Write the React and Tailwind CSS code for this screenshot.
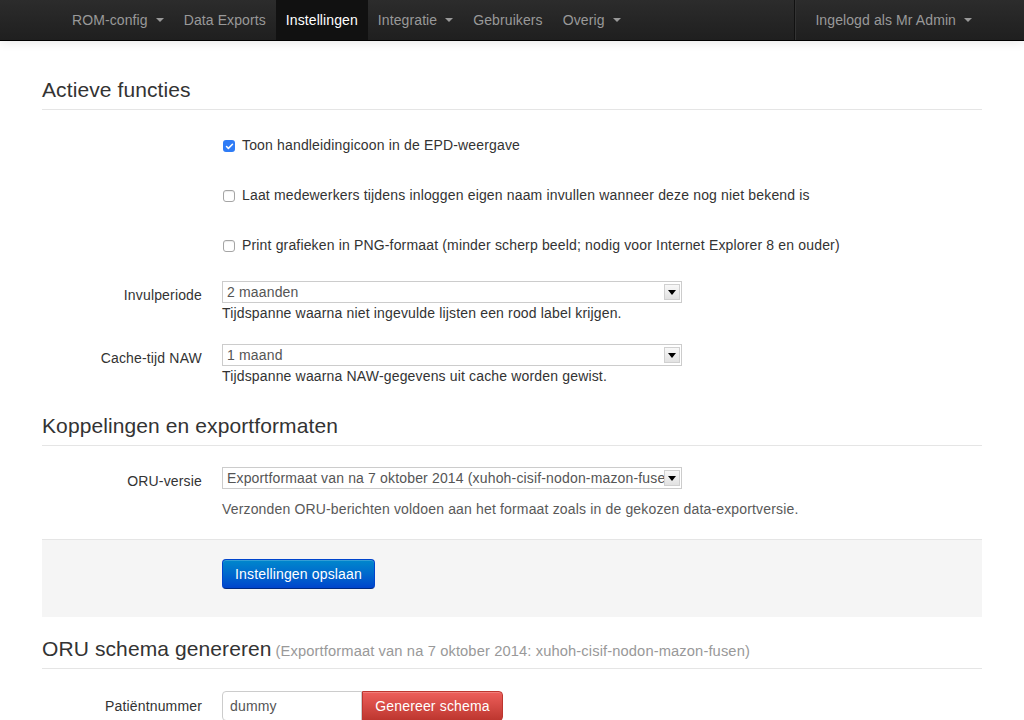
import { Check } from "lucide-react";

const FONT = { fontFamily: '"Liberation Sans", Arial, sans-serif' };

function Caret({ className = "border-t-[#999]" }) {
  return (
    <span className={`inline-block ml-[8px] align-middle w-0 h-0 border-l-[4px] border-r-[4px] border-t-[4px] border-l-transparent border-r-transparent ${className}`} />
  );
}

function NavItem({ label, caret, active }) {
  return (
    <li
      className={`h-10 px-[10px] flex items-center text-[14px] tracking-[0.1px] ${
        active ? "bg-[#111] text-white" : "text-[#999]"
      }`}
    >
      {label}
      {caret && <Caret />}
    </li>
  );
}

function CheckRow({ checked, children }) {
  return (
    <div className="ml-[180px] py-[5px] mb-5 leading-5 flex items-center gap-[7px] text-[14px] tracking-[0.16px] text-[#333]">
      {checked ? (
        <span className="w-[12px] h-[12px] ml-[1px] mt-[2px] rounded-[3px] bg-[#2f7cf6] grid place-items-center">
          <Check className="w-[9px] h-[9px] text-white" strokeWidth={4} />
        </span>
      ) : (
        <span className="w-[12px] h-[12px] ml-[1px] mt-[2px] rounded-[3px] border border-[#a5a5a5] bg-white shadow-[inset_0_1px_1px_rgba(0,0,0,0.08)]" />
      )}
      <span>{children}</span>
    </div>
  );
}

function FakeSelect({ value }) {
  return (
    <div className="w-[460px] h-[22px] border border-[#ccc] bg-white flex items-center justify-between pl-[4px] pr-[1px]">
      <span className="flex-1 min-w-0 overflow-hidden whitespace-nowrap text-[14px] tracking-[0.16px] text-[#555] leading-5">{value}</span>
      <span className="w-[16px] h-[16px] shrink-0 border border-[#d0d0d0] bg-gradient-to-b from-[#f8f8f8] to-[#e2e2e2] grid place-items-center">
        <span className="w-0 h-0 border-l-[4px] border-r-[4px] border-t-[5px] border-l-transparent border-r-transparent border-t-black" />
      </span>
    </div>
  );
}

function SelectGroup({ label, value, help, helpGap, helpMuted }) {
  return (
    <div className="flex mb-5">
      <label className="w-[160px] mr-5 text-right pt-[5px] leading-5 text-[14px] tracking-[0.16px] text-[#333]">{label}</label>
      <div className="pt-[1px]">
        <FakeSelect value={value} />
        <p className={`${helpGap ? "mt-[10px]" : ""} leading-5 text-[14px] tracking-[0.16px] ${helpMuted ? "text-[#595959]" : "text-[#333]"}`}>
          {help}
        </p>
      </div>
    </div>
  );
}

function Legend({ children, small }) {
  return (
    <div className="h-10 leading-10 border-b border-[#e5e5e5] mb-5 text-[21px] tracking-[0.1px] text-[#333] whitespace-nowrap">
      {children}
      {small && <span className="ml-[4px] text-[14.7px] tracking-[0.12px] text-[#999]">{small}</span>}
    </div>
  );
}

export default function App() {
  return (
    <div className="min-h-[720px] bg-white overflow-hidden" style={FONT}>
      <div className="h-[41px] bg-gradient-to-b from-[#2c2c2c] to-[#1f1f1f] border-b border-black shadow-[0_1px_10px_rgba(0,0,0,0.1)]">
        <div className="w-[940px] mx-auto flex justify-between">
          <ul className="flex ml-[20px]">
            <NavItem label="ROM-config" caret />
            <NavItem label="Data Exports" />
            <NavItem label="Instellingen" active />
            <NavItem label="Integratie" caret />
            <NavItem label="Gebruikers" />
            <NavItem label="Overig" caret />
          </ul>
          <ul className="flex">
            <li className="w-[2px] h-10 mr-[9px] border-l border-[#111] border-r border-r-[#333]" />
            <NavItem label="Ingelogd als Mr Admin" caret />
          </ul>
        </div>
      </div>

      <div className="w-[940px] mx-auto pt-[29px]">
        <Legend>Actieve functies</Legend>
        <CheckRow checked>Toon handleidingicoon in de EPD-weergave</CheckRow>
        <CheckRow>Laat medewerkers tijdens inloggen eigen naam invullen wanneer deze nog niet bekend is</CheckRow>
        <CheckRow>Print grafieken in PNG-formaat (minder scherp beeld; nodig voor Internet Explorer 8 en ouder)</CheckRow>
        <SelectGroup
          label="Invulperiode"
          value="2 maanden"
          help="Tijdspanne waarna niet ingevulde lijsten een rood label krijgen."
        />
        <SelectGroup
          label="Cache-tijd NAW"
          value="1 maand"
          help="Tijdspanne waarna NAW-gegevens uit cache worden gewist."
        />

        <Legend>Koppelingen en exportformaten</Legend>
        <SelectGroup
          label="ORU-versie"
          value="Exportformaat van na 7 oktober 2014 (xuhoh-cisif-nodon-mazon-fusen)"
          help="Verzonden ORU-berichten voldoen aan het formaat zoals in de gekozen data-exportversie."
          helpGap
          helpMuted
        />

        <div className="bg-[#f5f5f5] border-t border-[#e5e5e5] mt-[1px] pt-[19px] pb-[28px] pl-[180px] mb-3">
          <button
            type="button"
            className="h-[30px] px-[12px] rounded-[4px] text-[14px] tracking-[0.16px] text-white bg-gradient-to-b from-[#0088cc] to-[#0044cc] border border-[#0044cc] border-b-[#002a80] shadow-[inset_0_1px_0_rgba(255,255,255,0.2)]"
          >
            Instellingen opslaan
          </button>
        </div>

        <Legend small="(Exportformaat van na 7 oktober 2014: xuhoh-cisif-nodon-mazon-fusen)">ORU schema genereren</Legend>
        <div className="flex pt-[2px]">
          <label className="w-[160px] mr-5 text-right pt-[5px] leading-5 text-[14px] tracking-[0.16px] text-[#333]">Patiëntnummer</label>
          <div className="flex">
            <div className="w-[140px] h-[30px] border border-[#ccc] rounded-l-[4px] px-[7px] leading-[28px] text-[14px] tracking-[0.16px] text-[#555] bg-white">
              dummy
            </div>
            <button
              type="button"
              className="w-[141px] h-[30px] rounded-r-[4px] text-[14px] tracking-[0.16px] text-white bg-gradient-to-b from-[#ee5f5b] to-[#bd362f] border border-[#bd362f] shadow-[inset_0_1px_0_rgba(255,255,255,0.2)]"
            >
              Genereer schema
            </button>
          </div>
        </div>
      </div>
    </div>
  );
}
